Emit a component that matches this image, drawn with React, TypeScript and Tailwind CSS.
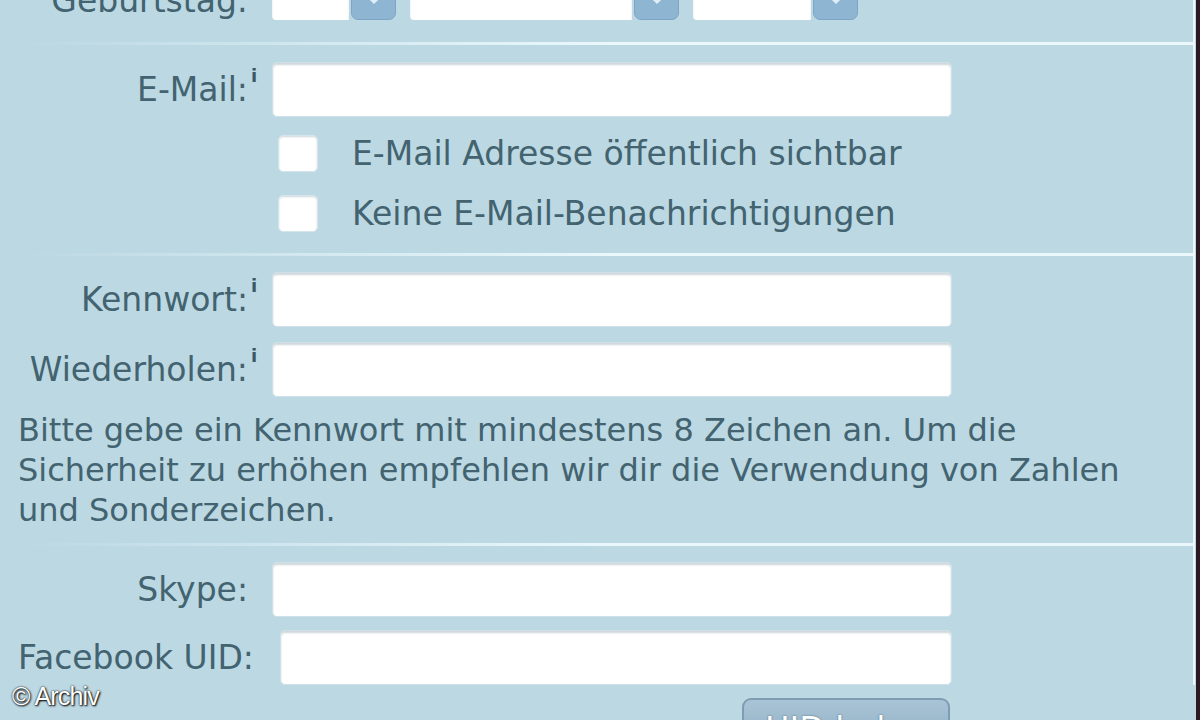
import React from 'react';

const font = { fontFamily: '"DejaVu Sans", Verdana, sans-serif' };

const Info = () => (
  <span className="w-[16px] self-start mt-[-6px] text-[18px] font-bold text-[#3b5866] leading-none pl-[3px]">i</span>
);

const TextInput = ({ className = '' }: { className?: string }) => (
  <div
    className={`h-[55px] bg-white rounded-[5px] border border-[#cfe0e8] shadow-[inset_0_2px_2px_rgba(60,90,105,0.25)] ${className}`}
  />
);

const Separator = () => (
  <div className="h-[3px] ml-[20px] bg-gradient-to-r from-[#bcd8e3] via-[#eaf8fc] to-[#eaf8fc]" />
);

const Row = ({ label, info = false, className = '' }: { label: string; info?: boolean; className?: string }) => (
  <div className={`flex items-center ${className}`}>
    <div className="w-[264px] flex justify-end items-center">
      <span>{label}</span>
      {info ? <Info /> : <span className="w-[16px]" />}
    </div>
    <TextInput className="ml-[8px] w-[680px]" />
  </div>
);

const Select = ({ w }: { w: string }) => (
  <div className="flex items-stretch h-[55px]">
    <div className={`bg-white rounded-l-[4px] shadow-[inset_0_2px_2px_rgba(60,90,105,0.2)] ${w}`} />
    <div className="w-[45px] ml-[2px] rounded-[7px] bg-[#8eb6d3] border border-[#7ea6c4] flex items-end justify-center pb-[14px]">
      <svg width="18" height="12" viewBox="0 0 18 12"><path d="M2 2 L9 9 L16 2" stroke="#dfeef7" strokeWidth="3" fill="none" /></svg>
    </div>
  </div>
);

const Checkbox = () => (
  <div className="w-[40px] h-[37px] bg-white rounded-[5px] shadow-[inset_0_1px_2px_rgba(60,90,105,0.25)] border border-[#d6e5ec]" />
);

export default function App() {
  return (
    <div className="relative w-[1200px] h-[720px] overflow-hidden bg-[#bcd8e3] text-[#42636f] text-[33px] leading-none" style={font}>
      <div className="w-[1195px] border-r-[2px] border-[#eef8fb] h-full">
        {/* Geburtstag */}
        <div className="flex items-center mt-[-35px] h-[55px]">
          <div className="w-[248px] text-right pt-[16px]">Geburtstag:</div>
          <div className="ml-[24px] flex gap-[14px]">
            <Select w="w-[77px]" />
            <Select w="w-[222px]" />
            <Select w="w-[118px]" />
          </div>
        </div>

        <div className="mt-[22px]"><Separator /></div>

        {/* E-Mail */}
        <Row label="E-Mail:" info className="mt-[17px]" />
        <div className="mt-[18px] flex items-center ml-[278px] h-[37px] gap-[34px]">
          <Checkbox />
          <span>E-Mail Adresse öffentlich sichtbar</span>
        </div>
        <div className="mt-[23px] flex items-center ml-[278px] h-[37px] gap-[34px]">
          <Checkbox />
          <span>Keine E-Mail-Benachrichtigungen</span>
        </div>

        <div className="mt-[21px]"><Separator /></div>

        {/* Kennwort */}
        <Row label="Kennwort:" info className="mt-[16px]" />
        <Row label="Wiederholen:" info className="mt-[15px]" />
        <p className="mt-[13px] ml-[18px] w-[1150px] text-[32px] leading-[40px]">
          Bitte gebe ein Kennwort mit mindestens 8 Zeichen an. Um die Sicherheit zu erhöhen empfehlen wir dir die Verwendung von Zahlen und Sonderzeichen.
        </p>

        <div className="mt-[13px]"><Separator /></div>

        {/* Kontakt */}
        <Row label="Skype:" className="mt-[16px]" />
        <div className="flex items-center mt-[13px]">
          <span className="ml-[18px] w-[240px] whitespace-nowrap">Facebook UID:</span>
          <TextInput className="ml-[22px] w-[672px]" />
        </div>
        <div className="flex justify-start ml-[742px] mt-[13px]">
          <button className="w-[208px] h-[60px] rounded-[9px] border-2 border-[#7f9db2] bg-gradient-to-b from-[#a9c4d6] to-[#8aa9bf] text-white text-[33px] leading-none pt-[2px] [text-shadow:0_0_2px_#46606f]" style={font}>
            UID holen
          </button>
        </div>
      </div>
      <div className="absolute right-0 top-0 w-[4px] h-full bg-[#2c1a22]" />
      <div
        className="absolute left-[12px] top-[684px] text-white text-[25px] tracking-[-0.8px] [text-shadow:0_0_2px_#000,1px_1px_2px_#000]"
        style={{ fontFamily: '"Liberation Sans", Arial, sans-serif' }}
      >
        © Archiv
      </div>
    </div>
  );
}
